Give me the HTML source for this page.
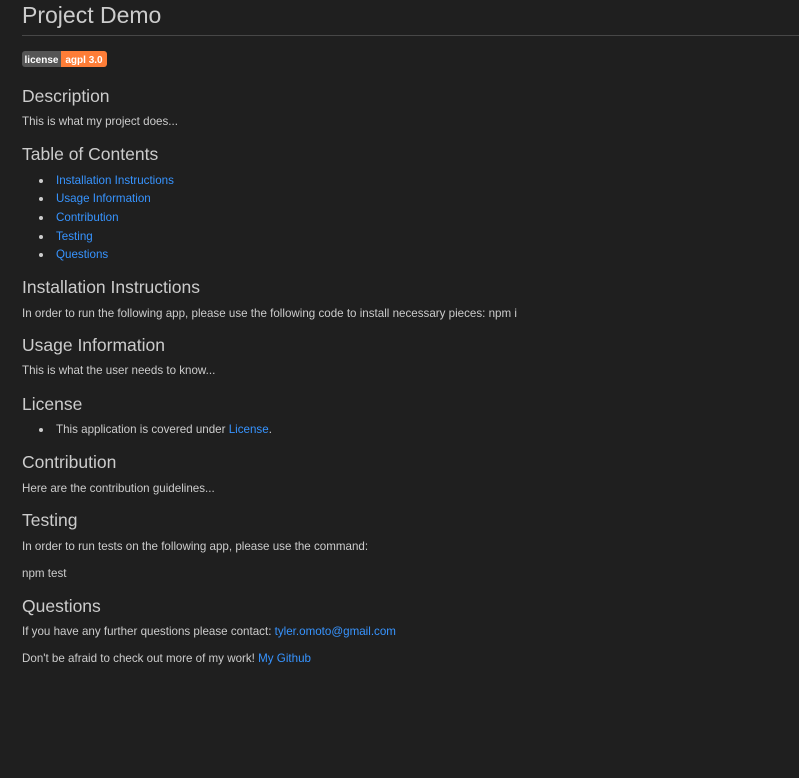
<!DOCTYPE html>
<html><head><meta charset="utf-8"><style>
html,body{margin:0;padding:0;background:#1f1f1f;width:799px;height:778px;overflow:hidden}
body{font-family:"Liberation Sans","DejaVu Sans",sans-serif;color:#cccccc;position:relative}
.a{position:absolute;white-space:nowrap;left:22px}
.h1{font-size:23px;line-height:30px;color:#cccccc}
.h2{font-size:17.5px;line-height:22px;color:#cccccc}
.p{font-size:11.6px;line-height:16px}
a{color:#3794ff;text-decoration:none}
.li{left:56px}
.dot{position:absolute;left:39px;width:4px;height:4px;border-radius:50%;background:#cccccc}
.hr{position:absolute;left:22px;right:0;top:35px;height:1px;background:#474747}
.badge{position:absolute;left:22px;top:51px;height:16px;border-radius:3px;overflow:hidden;font-size:10px;font-weight:bold;color:#fff;white-space:nowrap}
.badge span{display:inline-block;height:16px;line-height:19px;vertical-align:top;text-align:center;overflow:hidden}
</style></head><body>
<div class="a h1" style="top:0px">Project Demo</div>
<div class="hr"></div>
<div class="badge"><span style="background:#555;width:39px">license</span><span style="background:#fe7d37;width:46px">agpl 3.0</span></div>
<div class="a h2" style="top:85px">Description</div>
<div class="a p" style="top:114px">This is what my project does...</div>
<div class="a h2" style="top:143px">Table of Contents</div>
<div class="dot" style="top:179px"></div><div class="a p li" style="top:173px"><a>Installation Instructions</a></div>
<div class="dot" style="top:197px"></div><div class="a p li" style="top:191px"><a>Usage Information</a></div>
<div class="dot" style="top:216px"></div><div class="a p li" style="top:210px"><a>Contribution</a></div>
<div class="dot" style="top:235px"></div><div class="a p li" style="top:229px"><a>Testing</a></div>
<div class="dot" style="top:253px"></div><div class="a p li" style="top:247px"><a>Questions</a></div>
<div class="a h2" style="top:276px">Installation Instructions</div>
<div class="a p" style="top:306px">In order to run the following app, please use the following code to install necessary pieces: npm i</div>
<div class="a h2" style="top:334px">Usage Information</div>
<div class="a p" style="top:363px">This is what the user needs to know...</div>
<div class="a h2" style="top:393px">License</div>
<div class="dot" style="top:428px"></div><div class="a p li" style="top:422px">This application is covered under <a>License</a>.</div>
<div class="a h2" style="top:451px">Contribution</div>
<div class="a p" style="top:481px">Here are the contribution guidelines...</div>
<div class="a h2" style="top:509px">Testing</div>
<div class="a p" style="top:539px">In order to run tests on the following app, please use the command:</div>
<div class="a p" style="top:566px">npm test</div>
<div class="a h2" style="top:595px">Questions</div>
<div class="a p" style="top:624px">If you have any further questions please contact: <a>tyler.omoto@gmail.com</a></div>
<div class="a p" style="top:651px">Don't be afraid to check out more of my work! <a>My Github</a></div>
</body></html>
